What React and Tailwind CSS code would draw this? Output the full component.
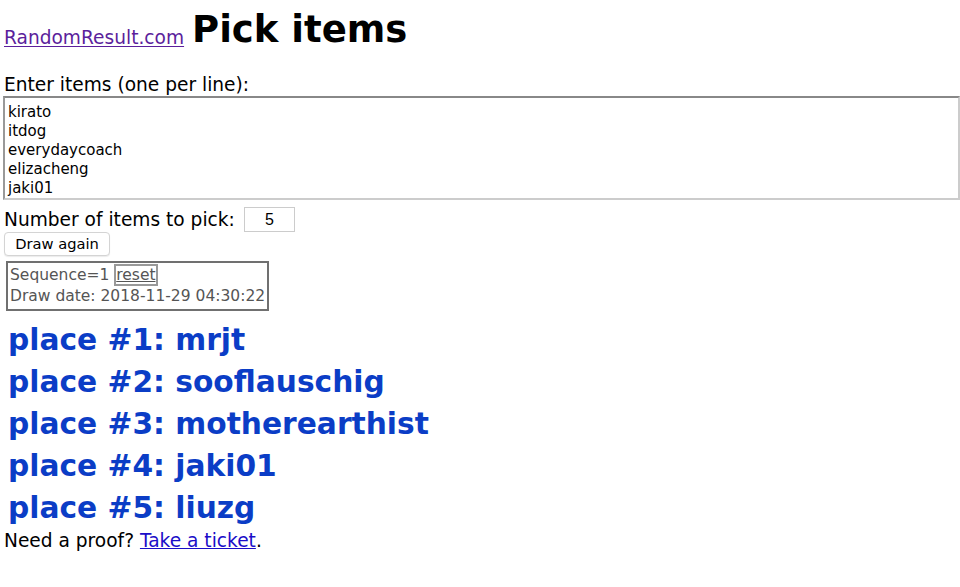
const items = ['kirato', 'itdog', 'everydaycoach', 'elizacheng', 'jaki01']
const winners = ['mrjt', 'sooflauschig', 'motherearthist', 'jaki01', 'liuzg']

export default function App(){
  return (
    <div className="bg-white min-h-[587px] text-black font-['DejaVu_Sans',sans-serif]">
      <div className="flex items-end gap-2 px-1 h-[66px] pb-[18px]">
        <a href="#" className="text-[18.6px] leading-none text-[#5b1f9c] underline underline-offset-2">RandomResult.com</a>
        <h1 className="text-[37px] font-bold leading-none">Pick items</h1>
      </div>

      <div className="px-1 text-[18.6px] leading-[22px] mt-[8px]">Enter items (one per line):</div>
      <div className="pl-[3px]">
        <div className="border-2 border-t-[#888] border-l-[#999] border-r-[#ccc] border-b-[#ccc] h-[104px] pl-[3px] pt-[5px] text-[15px] leading-[19px]">
          {items.map(it => <div key={it}>{it}</div>)}
        </div>
      </div>

      <div className="flex items-center px-1 mt-[7px] h-[25px] text-[18.6px]">
        <span>Number of items to pick:</span>
        <span className="ml-[9px] w-[51px] h-[25px] border border-[#ccc] flex items-center justify-center text-[16px] font-['Liberation_Sans',sans-serif]">5</span>
      </div>

      <div className="px-1">
        <button className="h-[24px] w-[106px] rounded-[4px] border border-[#d4d4d4] bg-white text-[14.7px] leading-none shadow-[0_1px_1px_rgba(0,0,0,0.08)]">Draw again</button>
      </div>

      <div className="pl-[6px] mt-[5px]">
        <div className="inline-block border-2 border-[#707070] px-[2px] py-[2px] text-[15.5px] leading-[21px] text-[#555]">
          <div>Sequence=1 <a href="#" className="underline border-2 border-[#999] px-0 text-[#555]">reset</a></div>
          <div>Draw date: 2018-11-29 04:30:22</div>
        </div>
      </div>

      <div className="pl-2 mt-[8px] text-[29.7px] leading-[42px] font-bold text-[#0b3dc6]">
        {winners.map((w, i) => <div key={i}>place #{i + 1}: {w}</div>)}
      </div>

      <div className="px-1 text-[18.6px] leading-[22px] mt-[1px]">
        Need a proof? <a href="#" className="text-[#1a0dc8] underline">Take a ticket</a>.
      </div>
    </div>
  )
}
